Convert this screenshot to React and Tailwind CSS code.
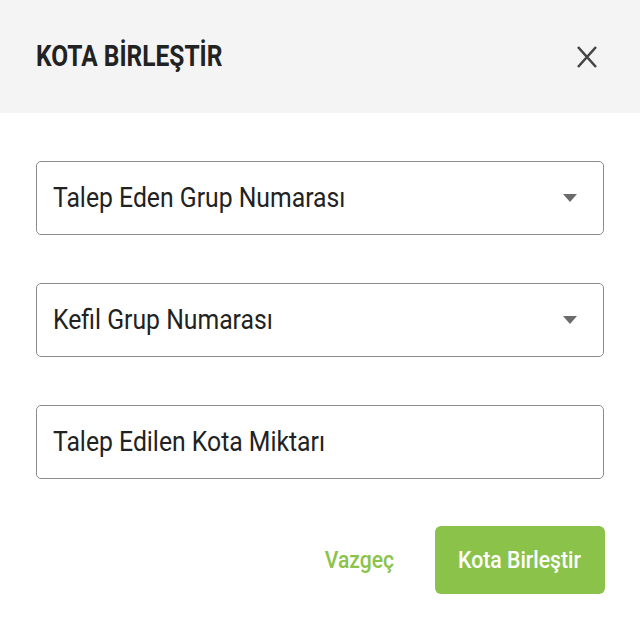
import React from 'react';

const font = { fontFamily: 'Roboto, "Noto Sans", sans-serif' };

function Caret() {
  return (
    <svg width="14" height="8" viewBox="0 0 14 8" className="shrink-0">
      <path d="M0 0 L14 0 L7 8 Z" fill="#6b6b6b" />
    </svg>
  );
}

function Field({ label, select }) {
  return (
    <div className="h-[74px] border border-[#8c8c8c] rounded-[5px] flex items-center justify-between pl-4 pr-[26px]">
      <span className="inline-block origin-left scale-x-[0.884] text-[28px] text-[#222] whitespace-nowrap">{label}</span>
      {select && <Caret />}
    </div>
  );
}

export default function App() {
  return (
    <div className="w-[640px] h-[640px] bg-white flex flex-col" style={font}>
      <div className="h-[113px] bg-[#f4f4f4] flex items-center justify-between pl-9 pr-[42px]">
        <span className="inline-block origin-left scale-x-[0.845] text-[29px] font-bold text-[#222] whitespace-nowrap">
          KOTA BİRLEŞTİR
        </span>
        <button className="text-[#444]">
          <svg width="22" height="24" viewBox="0 0 22 24">
            <path d="M2 2 L20 22 M20 2 L2 22" stroke="#444" strokeWidth="2.6" />
          </svg>
        </button>
      </div>
      <div className="flex flex-col gap-12 px-9 pt-12">
        <Field label="Talep Eden Grup Numarası" select />
        <Field label="Kefil Grup Numarası" select />
        <Field label="Talep Edilen Kota Miktarı" />
      </div>
      <div className="flex items-center justify-end gap-9 pr-[35px] pt-[47px]">
        <button className="text-[#8bc34a] text-[24px] font-medium">
          <span className="inline-block scale-x-[0.88]">Vazgeç</span>
        </button>
        <button className="w-[170px] h-[68px] rounded-[6px] bg-[#8bc34a] text-white text-[24px] font-medium">
          <span className="inline-block scale-x-[0.885]">Kota Birleştir</span>
        </button>
      </div>
    </div>
  );
}
